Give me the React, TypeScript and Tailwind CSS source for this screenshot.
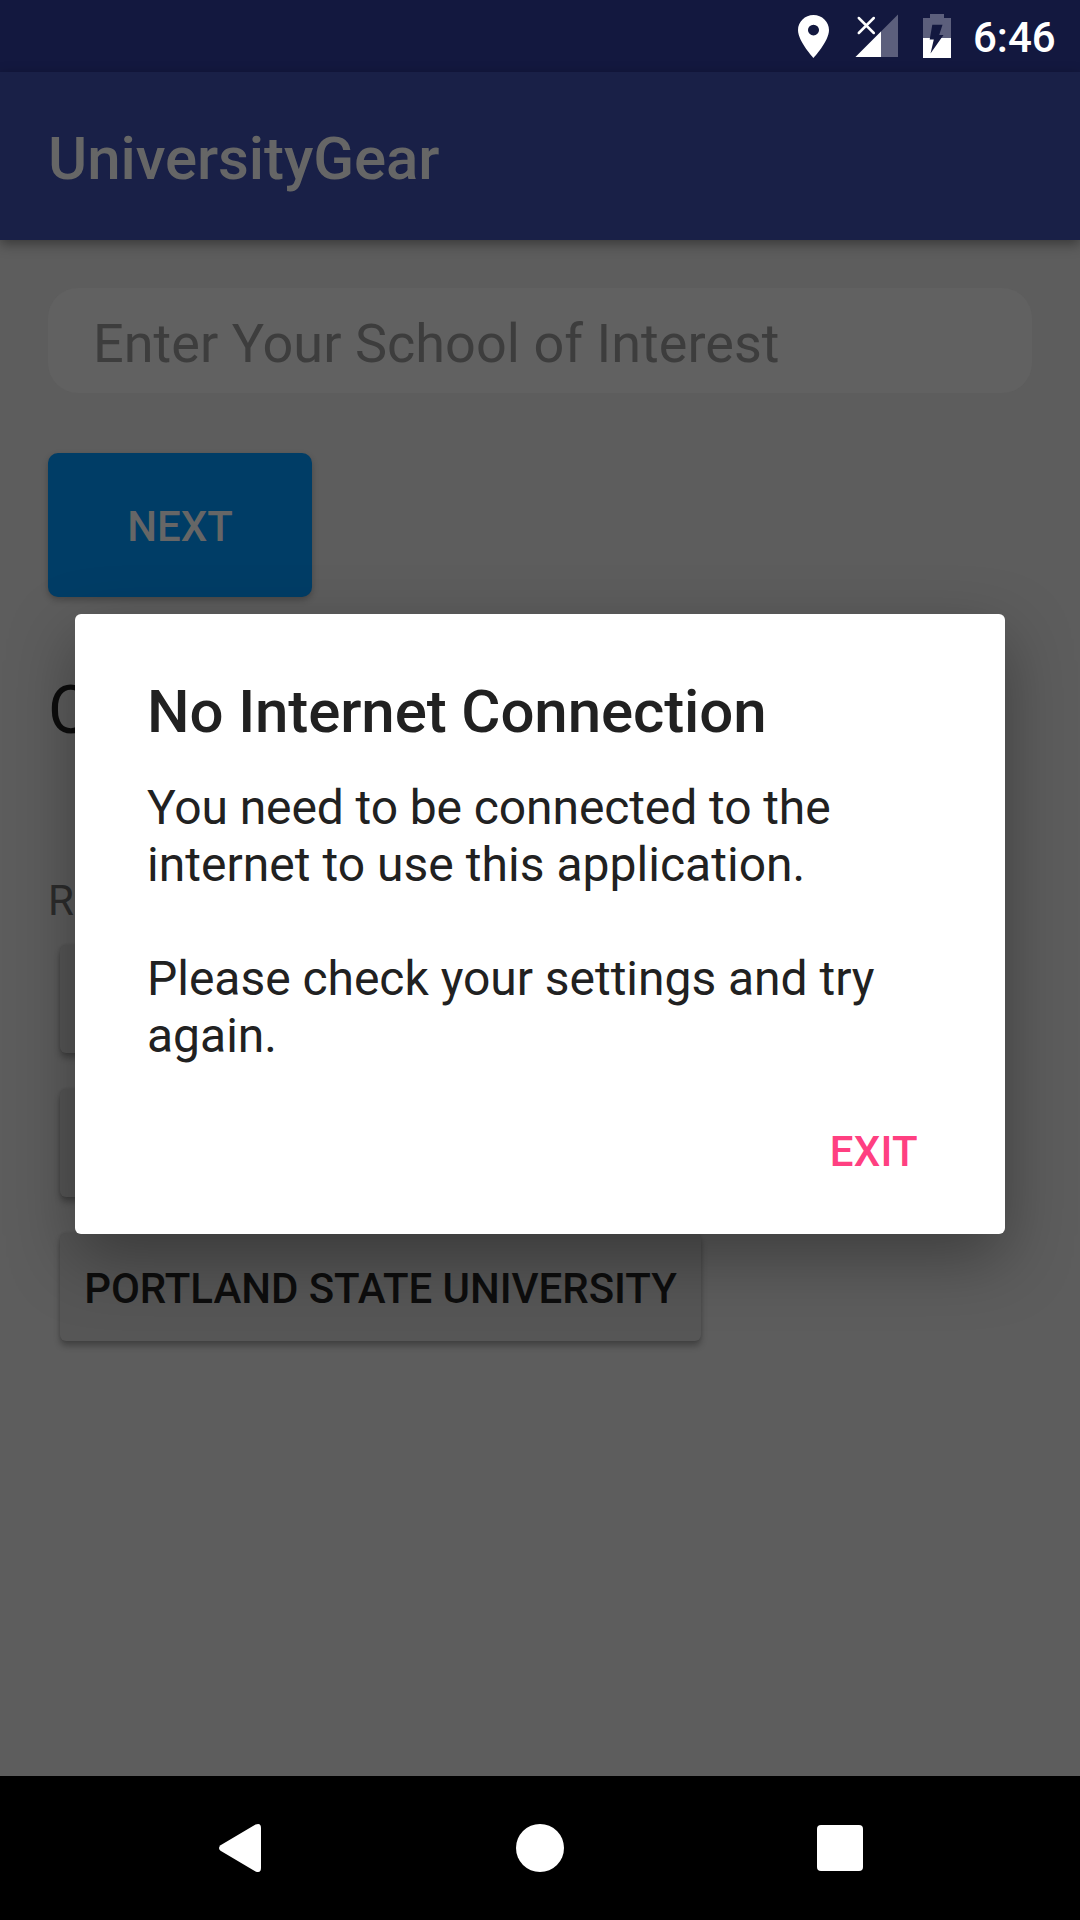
import React from "react";

function StatusBar() {
  return (
    <div className="flex h-[72px] items-start bg-[#13183f]">
      <div className="flex h-full w-full items-start justify-end pr-6">
        <svg className="mt-[15px] mr-[26px] h-[43px] w-[31px]" viewBox="5 2 14 20" preserveAspectRatio="none" fill="#fff">
          <path d="M12 2C8.13 2 5 5.13 5 9c0 5.25 7 13 7 13s7-7.75 7-13c0-3.87-3.13-7-7-7zm0 9.5a2.5 2.5 0 1 1 0-5 2.5 2.5 0 0 1 0 5z" />
        </svg>
        <svg className="mt-3.5 mr-[25px] h-11 w-[43px]" viewBox="-1 0 43 44" fill="none">
          <path d="M42 0.5V43H-0.5z" fill="#5c5f7c" />
          <path d="M25 17.5V43H-0.5z" fill="#fff" />
          <path d="M2.800 4L17.800 19M17.800 4L2.800 19" stroke="#fff" strokeWidth="2.5" strokeLinecap="round" />
        </svg>
        <svg className="mt-3.5 mr-[22px] h-11 w-7" viewBox="0 0 28 44">
          <path d="M7 0h14v4h7v20H0V4h7z" fill="#5c5f7c" />
          <path d="M0 24h28v20H0z" fill="#fff" />
          <path d="M9.300 10.800h10.200l-3.300 10.200h4.300L7.500 39.500l3.300-14H6.700z" fill="#13183f" />
        </svg>
        <span className="mt-2.5 h-14 w-[83px] text-[42px] leading-[56px] font-medium text-white">6:46</span>
      </div>
    </div>
  );
}

function RecentButton({ label }: { label: string }) {
  return (
    <button className="mb-9 ml-3 h-[108px] w-[641px] rounded-md bg-[#565656] pt-1 text-[42px] leading-[50px] font-medium tracking-[-0.05px] whitespace-nowrap text-[#0d0d0d] shadow-[0_5px_6px_rgba(0,0,0,0.28),0_0_3px_rgba(0,0,0,0.12)]">
      {label}
    </button>
  );
}

function Dialog() {
  return (
    <div className="absolute top-[614px] left-[75px] flex h-[620px] w-[930px] flex-col rounded-md bg-white px-[72px] pt-[63px] text-[#212121] shadow-[0_24px_66px_rgba(0,0,0,0.34)]">
      <h2 className="text-[60px] leading-[70px] font-medium tracking-[-0.11px]">No Internet Connection</h2>
      <p className="mt-8 text-[48px] leading-[57px]">
        <span className="tracking-[-0.1px]">You need to be connected to the</span>
        <br />
        <span className="tracking-[0.03px]">internet to use this application.</span>
        <br />
        <br />
        <span className="tracking-[-0.03px]">Please check your settings and try</span>
        <br />
        again.
      </p>
      <button className="mt-[63px] mr-[15px] self-end text-[42px] leading-[50px] font-medium tracking-[0.3px] text-[#ff4081]">EXIT</button>
    </div>
  );
}

export default function App() {
  return (
    <div className="relative flex h-[1920px] w-[1080px] flex-col overflow-hidden bg-[#5d5d5d] font-[Roboto,sans-serif]">
      <StatusBar />
      <header className="flex h-[168px] items-center bg-[#192047] px-12 shadow-[0_4px_12px_rgba(0,0,0,0.4)]">
        <h1 className="pt-1.5 text-[60px] leading-[70px] font-medium tracking-[-0.1px] text-[#666666]">UniversityGear</h1>
      </header>
      <main className="flex flex-1 flex-col items-start px-12 pt-12">
        <div className="flex h-[105px] w-full items-center rounded-[30px] bg-[#616161] pt-[7px] pl-[45px] text-[54px] leading-[64px] tracking-[0.04px] text-[#3d3d3d]">
          Enter Your School of Interest
        </div>
        <button className="mt-[60px] h-36 w-[264px] rounded-[10px] bg-[#003d66] pt-1 text-[42px] leading-[50px] font-medium text-[#666666] shadow-[0_3px_6px_rgba(0,0,0,0.25)]">
          NEXT
        </button>
        <div className="mt-[75px] text-[66px] leading-[78px] text-[#0d0d0d]">OR</div>
        <div className="mt-[126px] text-[42px] leading-[50px] text-[#2c2c2c]">Recent</div>
        <div className="mt-[19px] flex flex-col">
          <RecentButton label="" />
          <RecentButton label="" />
          <RecentButton label="PORTLAND STATE UNIVERSITY" />
        </div>
      </main>
      <nav className="flex h-36 items-center justify-between bg-black pr-[217px] pl-[219px]">
        <svg className="h-12 w-[42px]" viewBox="0 0 42 48" fill="#fff">
          <path d="M36.500 0.600L1.500 21.200Q-1.500 24 1.500 26.800L36.500 47.400Q42 49.500 42 44V4Q42 -1.500 36.500 0.600z" />
        </svg>
        <div className="ml-0.5 size-12 rounded-full bg-white" />
        <div className="size-[46px] rounded bg-white" />
      </nav>
      <Dialog />
    </div>
  );
}
